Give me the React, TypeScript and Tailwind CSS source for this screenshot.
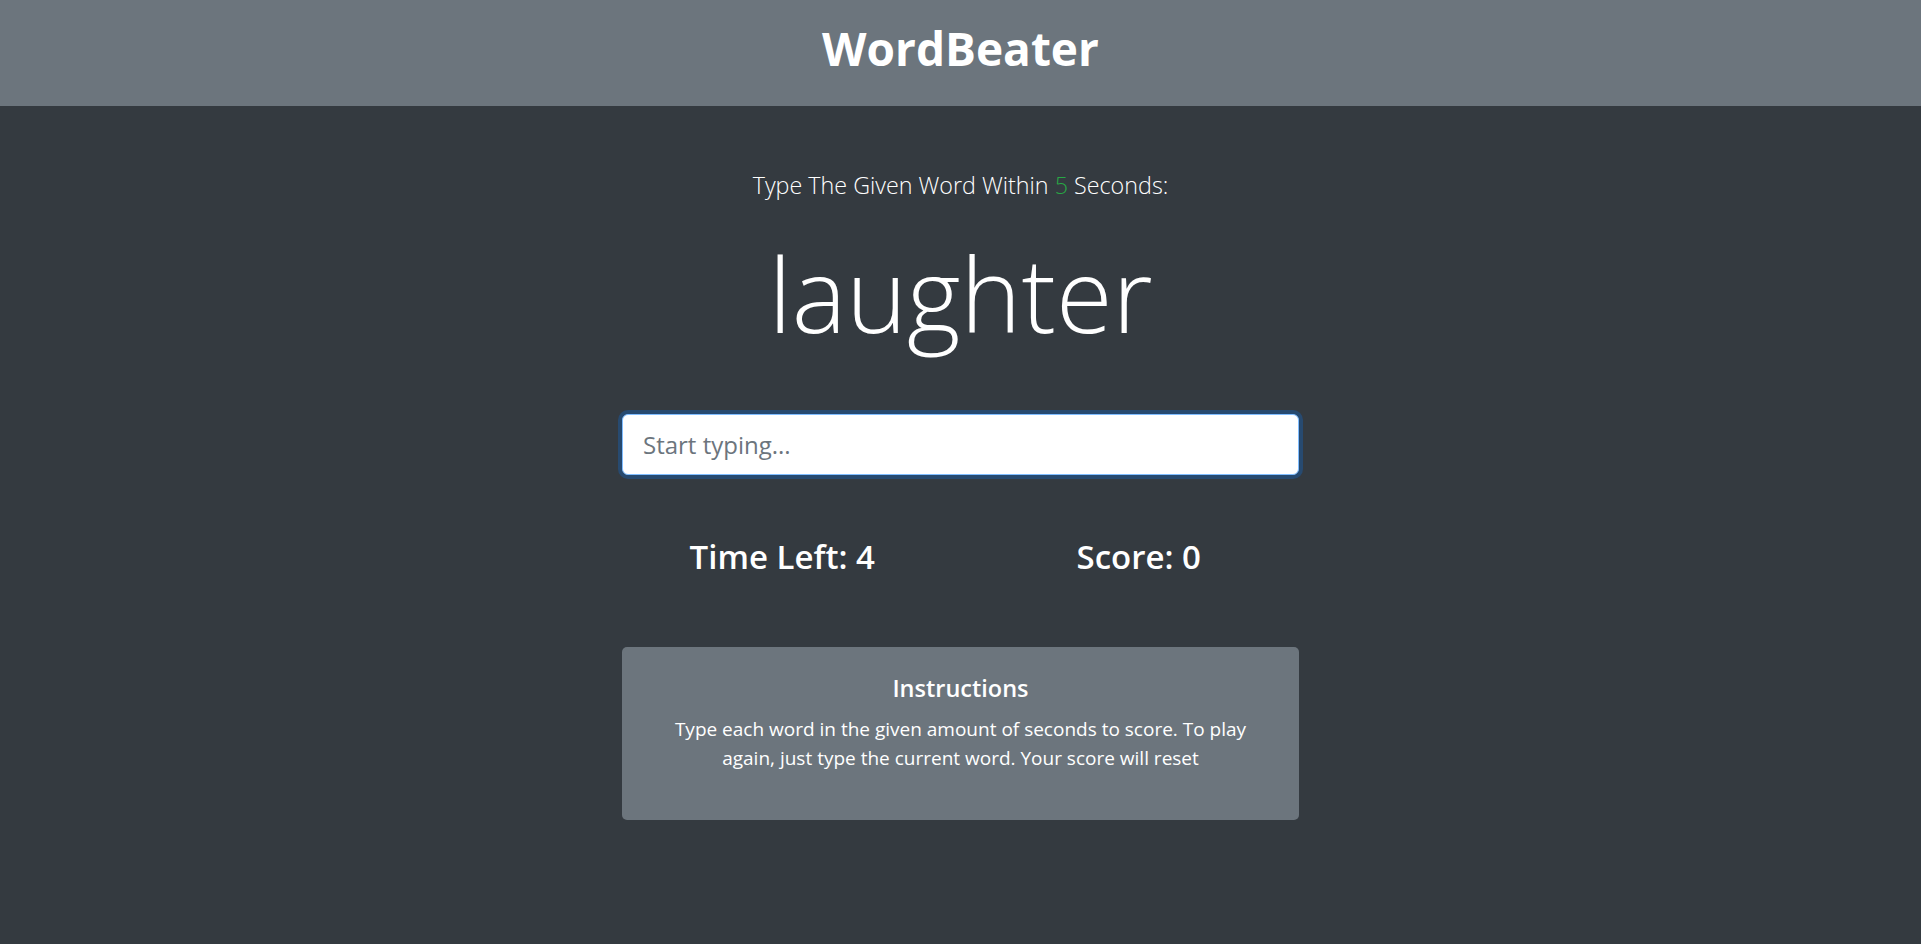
const App = () => {
  return (
    <div className="min-h-screen bg-[#343a40] text-white font-['Open_Sans',sans-serif]">
      <header className="bg-[#6c757d] pt-[19px] pb-[28px] text-center">
        <h1 className="text-[46px] font-bold leading-[59px]">WordBeater</h1>
      </header>

      <main className="mx-auto w-[677px] pt-[61px] pb-10">
        <p className="text-center text-[23.3px] font-light leading-[37px]">
          Type The Given Word Within <span className="text-[#28a745]">5</span> Seconds:
        </p>
        <h2 className="mt-[24px] text-center text-[103px] font-light leading-[130px]">laughter</h2>

        <input
          type="text"
          placeholder="Start typing..."
          className="mt-[56px] block h-[61px] w-full rounded-[6px] border border-[#80bdff] bg-white px-5 text-[24px] text-[#495057] shadow-[0_0_0_4px_rgba(0,123,255,0.25)] outline-none placeholder:text-[#6c757d]"
        />

        <div className="-mx-[18px] mt-[61px] grid grid-cols-2 text-center">
          <h3 className="text-[33px] font-semibold leading-[41px]">Time Left: 4</h3>
          <h3 className="text-[33px] font-semibold leading-[41px]">Score: 0</h3>
        </div>

        <div className="mt-[70px] rounded-[5px] bg-[#6c757d] px-[25px] pt-[27px] pb-[46px] text-center">
          <h5 className="mb-[12px] text-[23.5px] font-semibold leading-[29px]">Instructions</h5>
          <p className="text-[19px] leading-[29.4px]">
            Type each word in the given amount of seconds to score. To play again, just type the current word. Your
            score will reset
          </p>
        </div>
      </main>
    </div>
  );
};

export default App;
